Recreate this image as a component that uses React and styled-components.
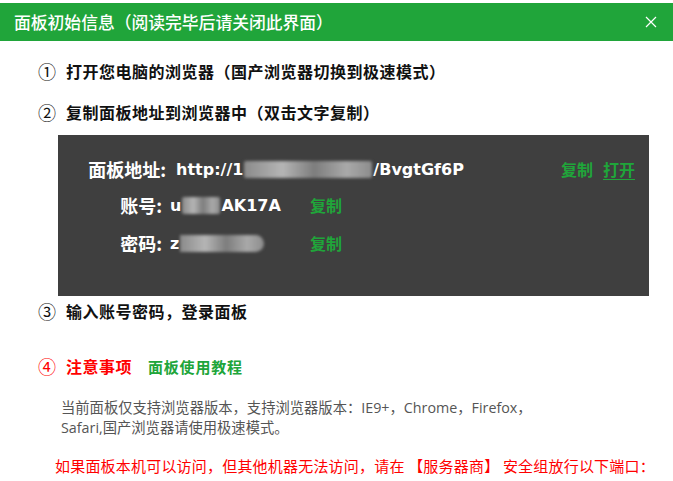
import styled, { createGlobalStyle } from "styled-components";

const GlobalStyle = createGlobalStyle`
  html, body {
    margin: 0;
    padding: 0;
    background: #fff;
  }
  body {
    font-family: "Noto Sans CJK SC", "Liberation Sans", sans-serif;
  }
`;

const GREEN = "#20a53a";
const RED = "#f00";

const Page = styled.div`
  width: 673px;
  height: 481px;
  overflow: hidden;
  padding-top: 3px;
  box-sizing: border-box;
`;

const Header = styled.div`
  height: 38px;
  background: ${GREEN};
  display: flex;
  align-items: center;
  justify-content: space-between;
  padding: 0 16px 0 14px;
  color: #fff;
`;

const Title = styled.h1`
  margin: 0;
  font-size: 16.8px;
  font-weight: 500;
  line-height: 1;
`;

const Close = styled.button`
  border: 0;
  background: none;
  padding: 0;
  width: 12px;
  height: 12px;
  display: flex;
  cursor: pointer;
`;

const Body = styled.div`
  display: flex;
  flex-direction: column;
  padding: 18px 24px 0 38px;
`;

const Step = styled.div`
  display: flex;
  align-items: center;
  gap: 10px;
  height: 24px;
  margin-top: ${(p) => p.$gap || 0}px;
  font-size: 16px;
  font-weight: 700;
  letter-spacing: 0.5px;
  color: ${(p) => p.$color || "#111"};
`;

const Num = styled.span`
  font-size: 18px;
  font-weight: 400;
  width: 18px;
  letter-spacing: 0;
`;

const Panel = styled.div`
  margin: 11px 0 0 20px;
  height: 161px;
  box-sizing: border-box;
  background: #3f3f3f;
  padding: 17px 14px 0 28px;
  display: flex;
  flex-direction: column;
`;

const Row = styled.div`
  display: flex;
  align-items: center;
  height: ${(p) => p.$h || 36}px;
  color: #fff;
  font-weight: 700;
`;

const Label = styled.span`
  width: ${(p) => p.$w || 80}px;
  text-align: right;
  font-size: 18px;
  margin-right: ${(p) => p.$mr || 10}px;
`;

const Value = styled.span`
  display: flex;
  align-items: center;
  font-family: "DejaVu Sans", "Noto Sans CJK SC", sans-serif;
  font-size: 16px;
  width: ${(p) => (p.$w ? `${p.$w}px` : "auto")};
  flex: ${(p) => (p.$w ? "none" : 1)};
  white-space: nowrap;
`;

const Blur = styled.span`
  display: inline-block;
  width: ${(p) => p.$w}px;
  height: 17px;
  margin: 0 1px;
  background: linear-gradient(90deg, #8a8a8a, #b5b5b5 30%, #7d7d7d 55%, #a9a9a9 80%, #8c8c8c);
  filter: blur(1.5px);
  border-radius: ${(p) => (p.$round ? "0 9px 9px 0" : "2px")};
`;

const Link = styled.a`
  color: ${GREEN};
  font-size: 16px;
  font-weight: 700;
  text-decoration: ${(p) => (p.$underline ? "underline" : "none")};
  text-underline-offset: 3px;
  cursor: pointer;
  & + & {
    margin-left: 10px;
  }
`;

const Tutorial = styled.a`
  color: ${GREEN};
  font-size: 15px;
  font-weight: 700;
  letter-spacing: 0.8px;
  margin-left: 6px;
`;

const Note = styled.p`
  margin: ${(p) => p.$mt}px 0 0 ${(p) => p.$ml}px;
  font-family: ${(p) =>
    p.$latin ? `"Open Sans", "Noto Sans CJK SC", sans-serif` : `"Noto Sans CJK SC", sans-serif`};
  font-size: ${(p) => p.$size}px;
  letter-spacing: ${(p) => p.$ls || 0}px;
  line-height: 20px;
  white-space: nowrap;
  color: ${(p) => p.$color};
`;

export default function App() {
  return (
    <Page>
      <GlobalStyle />
      <Header>
        <Title>面板初始信息（阅读完毕后请关闭此界面）</Title>
        <Close aria-label="关闭">
          <svg width="12" height="12" viewBox="0 0 12 12">
            <path d="M1 1L11 11M11 1L1 11" stroke="#fff" strokeWidth="1.2" />
          </svg>
        </Close>
      </Header>
      <Body>
        <Step>
          <Num>①</Num>打开您电脑的浏览器（国产浏览器切换到极速模式）
        </Step>
        <Step $gap={17}>
          <Num>②</Num>复制面板地址到浏览器中（双击文字复制）
        </Step>
        <Panel>
          <Row $h={34}>
            <Label>面板地址:</Label>
            <Value>
              http://1<Blur $w={128} />/BvgtGf6P
            </Value>
            <Link>复制</Link>
            <Link $underline>打开</Link>
          </Row>
          <Row $h={38}>
            <Label $w={76} $mr={8}>账号:</Label>
            <Value $w={140}>
              u<Blur $w={38} />AK17A
            </Value>
            <Link>复制</Link>
          </Row>
          <Row $h={38}>
            <Label $w={76} $mr={8}>密码:</Label>
            <Value $w={140}>
              z<Blur $w={84} $round />
            </Value>
            <Link>复制</Link>
          </Row>
        </Panel>
        <Step $gap={3}>
          <Num>③</Num>输入账号密码，登录面板
        </Step>
        <Step $gap={31} $color={RED}>
          <Num>④</Num>注意事项
          <Tutorial>面板使用教程</Tutorial>
        </Step>
        <Note $latin $mt={20} $ml={23} $size={14.3} $color="#555">
          当前面板仅支持浏览器版本，支持浏览器版本：IE9+，Chrome，Firefox，
          <br />
          Safari,国产浏览器请使用极速模式。
        </Note>
        <Note $mt={18} $ml={17} $size={15} $ls={0.2} $color={RED}>
          如果面板本机可以访问，但其他机器无法访问，请在 【服务器商】 安全组放行以下端口：
        </Note>
      </Body>
    </Page>
  );
}
